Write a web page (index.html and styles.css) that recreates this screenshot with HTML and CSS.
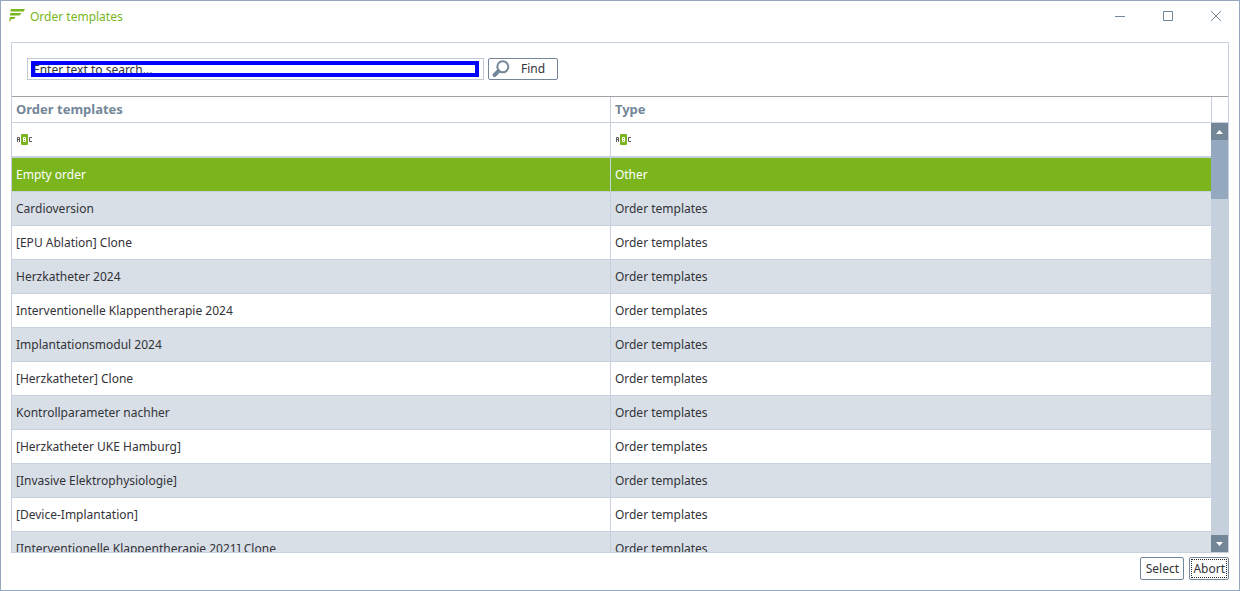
FILE: index.html
```html
<!DOCTYPE html>
<html lang="en">
<head>
<meta charset="utf-8">
<title>Order templates</title>
<link rel="stylesheet" href="styles.css">
</head>
<body>
<div class="window">
  <header class="titlebar">
    <svg class="logo" width="16" height="15" viewBox="0 0 16 15" aria-hidden="true"><path d="M2 0H16L14.5 2.5H1.2zM1.5 4H12.5L10.5 6.5H0.7zM0.8 8H6.8L5 10H2.6L0.2 13z"/></svg>
    <h1 class="title">Order templates</h1>
    <div class="window-controls">
      <button class="control" type="button" aria-label="Minimize"><svg width="12" height="12" viewBox="-1 1 12 12"><path d="M1 6.5H11"/></svg></button>
      <button class="control" type="button" aria-label="Maximize"><svg width="12" height="12" viewBox="-1 1 12 12"><path d="M1.5 1.5H10.5V10.5H1.5z"/></svg></button>
      <button class="control" type="button" aria-label="Close"><svg width="12" height="12" viewBox="-1 1 12 12"><path d="M1 1L11 11M11 1L1 11"/></svg></button>
    </div>
  </header>

  <main class="panel">
    <form class="search">
      <div class="search-box"><input class="search-input" type="text" aria-label="Search" placeholder="Enter text to search..."></div>
      <button class="button find" type="button">
        <svg width="18" height="18" viewBox="0 0 18 18" aria-hidden="true"><circle cx="10.8" cy="6.8" r="5.5"/><path class="handle" d="M6.2 11.4L2.6 15"/></svg>
        <span>Find</span>
      </button>
    </form>

    <div class="grid">
      <div class="viewport">
        <table class="templates">
          <thead>
            <tr class="head"><th scope="col">Order templates</th><th scope="col">Type</th></tr>
            <tr class="filter">
              <td><svg class="abc" width="16" height="11" viewBox="0 0 16 11" role="img" aria-label="Filter by text"><rect class="abc-box" x="5" width="7" height="11" rx="1"/><path class="abc-dark" d="M1.5 8V3.5H3.5V8M1.5 5.5H3.5M16 3.5H13.5V7.5H16"/><path class="abc-light" d="M7.5 3.5H9.5V7.5H7.5zM7.5 5.5H9.5"/></svg></td>
              <td><svg class="abc" width="16" height="11" viewBox="0 0 16 11" role="img" aria-label="Filter by text"><rect class="abc-box" x="5" width="7" height="11" rx="1"/><path class="abc-dark" d="M1.5 8V3.5H3.5V8M1.5 5.5H3.5M16 3.5H13.5V7.5H16"/><path class="abc-light" d="M7.5 3.5H9.5V7.5H7.5zM7.5 5.5H9.5"/></svg></td>
            </tr>
          </thead>
          <tbody>
            <tr class="selected"><td>Empty order</td><td>Other</td></tr>
            <tr><td>Cardioversion</td><td>Order templates</td></tr>
            <tr><td>[EPU Ablation] Clone</td><td>Order templates</td></tr>
            <tr><td>Herzkatheter 2024</td><td>Order templates</td></tr>
            <tr><td>Interventionelle Klappentherapie 2024</td><td>Order templates</td></tr>
            <tr><td>Implantationsmodul 2024</td><td>Order templates</td></tr>
            <tr><td>[Herzkatheter] Clone</td><td>Order templates</td></tr>
            <tr><td>Kontrollparameter nachher</td><td>Order templates</td></tr>
            <tr><td>[Herzkatheter UKE Hamburg]</td><td>Order templates</td></tr>
            <tr><td>[Invasive Elektrophysiologie]</td><td>Order templates</td></tr>
            <tr><td>[Device-Implantation]</td><td>Order templates</td></tr>
            <tr><td>[Interventionelle Klappentherapie 2021] Clone</td><td>Order templates</td></tr>
          </tbody>
        </table>
      </div>
      <div class="rail">
        <div class="rail-head"></div>
        <div class="scrollbar">
          <button class="arrow" type="button" aria-label="Scroll up"><svg width="7" height="4" viewBox="0 0 7 4"><path d="M0 4L3.5 0L7 4z"/></svg></button>
          <div class="track"><div class="thumb"></div></div>
          <button class="arrow" type="button" aria-label="Scroll down"><svg width="7" height="4" viewBox="0 0 7 4"><path d="M0 0H7L3.5 4z"/></svg></button>
        </div>
      </div>
    </div>
  </main>

  <footer class="actions">
    <button class="button select" type="button">Select</button>
    <button class="button focused" type="button">Abort</button>
  </footer>
</div>
</body>
</html>
```
FILE: styles.css
```css
:root {
  --line: #c6d1dd;
  --slate: #748799;
  --steel: #94a9bf;
  --green: #7ab51d;
  --ink: #333338;
}

* {
  box-sizing: border-box;
}

body {
  margin: 0;
  background: #fff;
  color: var(--ink);
  font: 12px/16px "Noto Sans", sans-serif;
}

button,
input {
  font: inherit;
  color: inherit;
}

svg {
  display: block;
}

.window {
  display: flex;
  flex-direction: column;
  height: 100vh;
  padding: 0 10px 10px;
  border: 1px solid var(--steel);
}

.titlebar {
  display: flex;
  flex: none;
  align-items: center;
  height: 31px;
  margin: 0 -10px 10px;
  padding-left: 8px;
}

.logo {
  fill: var(--green);
}

.title {
  flex: 1;
  margin: 0 0 0 5px;
  color: var(--green);
  font-size: 12px;
  font-weight: normal;
}

.window-controls {
  display: flex;
}

.control {
  display: grid;
  place-items: center;
  width: 48px;
  height: 31px;
  padding: 0;
  border: 0;
  background: none;
}

.control svg {
  fill: none;
  stroke: var(--slate);
}

.panel {
  display: flex;
  flex: 1;
  flex-direction: column;
  min-height: 0;
  border: 1px solid var(--line);
}

.search {
  display: flex;
  flex: none;
  gap: 4px;
  padding: 15px 15px 16px;
  border-bottom: 1px solid #a0a0a0;
}

.search-box {
  width: 457px;
  height: 22px;
  padding: 2px 4px 2px 3px;
  border: 1px solid #bfc9d5;
}

.search-input {
  display: block;
  width: 100%;
  height: 16px;
  padding: 2px 2px 0;
  border: 0;
  outline: 4px solid #00f;
  outline-offset: -4px;
}

.search-input::placeholder {
  color: var(--ink);
  opacity: 1;
}

.button {
  height: 23px;
  padding: 0 3px;
  border: 1px solid var(--slate);
  border-radius: 2px;
  background: #fff;
}

.select {
  min-width: 44px;
}

.find {
  display: flex;
  align-items: center;
  gap: 11px;
  width: 70px;
  height: 22px;
}

.find svg {
  fill: none;
  stroke: var(--slate);
  stroke-width: 2;
}

.find .handle {
  stroke-width: 4;
  stroke-linecap: round;
}

.grid {
  display: flex;
  flex: 1;
  min-height: 0;
}

.viewport {
  flex: 1;
  overflow: hidden;
}

.templates {
  width: 100%;
  border-spacing: 0;
  table-layout: fixed;
}

.templates th,
.templates td {
  height: 34px;
  padding: 0 4px;
  border-bottom: 1px solid var(--line);
  text-align: left;
}

.templates th:first-child {
  width: 49.95%;
}

.templates th:first-child,
.templates td:first-child {
  border-right: 1px solid var(--line);
}

.templates .head th {
  height: 26px;
  padding-bottom: 2px;
  color: var(--slate);
  font-size: 13px;
}

.templates .filter td {
  height: 35px;
  border-bottom: 2px solid var(--line);
}

.templates tbody tr:nth-child(even) {
  background: #d8dfe7;
}

.templates tbody .selected {
  background: var(--green);
  color: #fff;
}

.abc-box {
  fill: var(--green);
}

.abc-dark,
.abc-light {
  fill: none;
  stroke: #5c5c60;
}

.abc-light {
  stroke: #fff;
}

.rail {
  display: flex;
  flex: none;
  flex-direction: column;
  width: 17px;
}

.rail-head {
  height: 26px;
  border-bottom: 1px solid var(--line);
  border-left: 1px solid var(--line);
}

.scrollbar {
  display: flex;
  flex: 1;
  flex-direction: column;
  background: var(--line);
}

.arrow {
  display: grid;
  place-items: center;
  height: 17px;
  padding: 0;
  border: 0;
  background: var(--slate);
}

.arrow svg {
  fill: #fff;
}

.track {
  flex: 1;
}

.thumb {
  height: 59px;
  background: var(--steel);
}

.actions {
  display: flex;
  flex: none;
  justify-content: flex-end;
  gap: 5px;
  padding-top: 4px;
}

.focused {
  outline: 1px dotted #222;
  outline-offset: -3px;
}
```
